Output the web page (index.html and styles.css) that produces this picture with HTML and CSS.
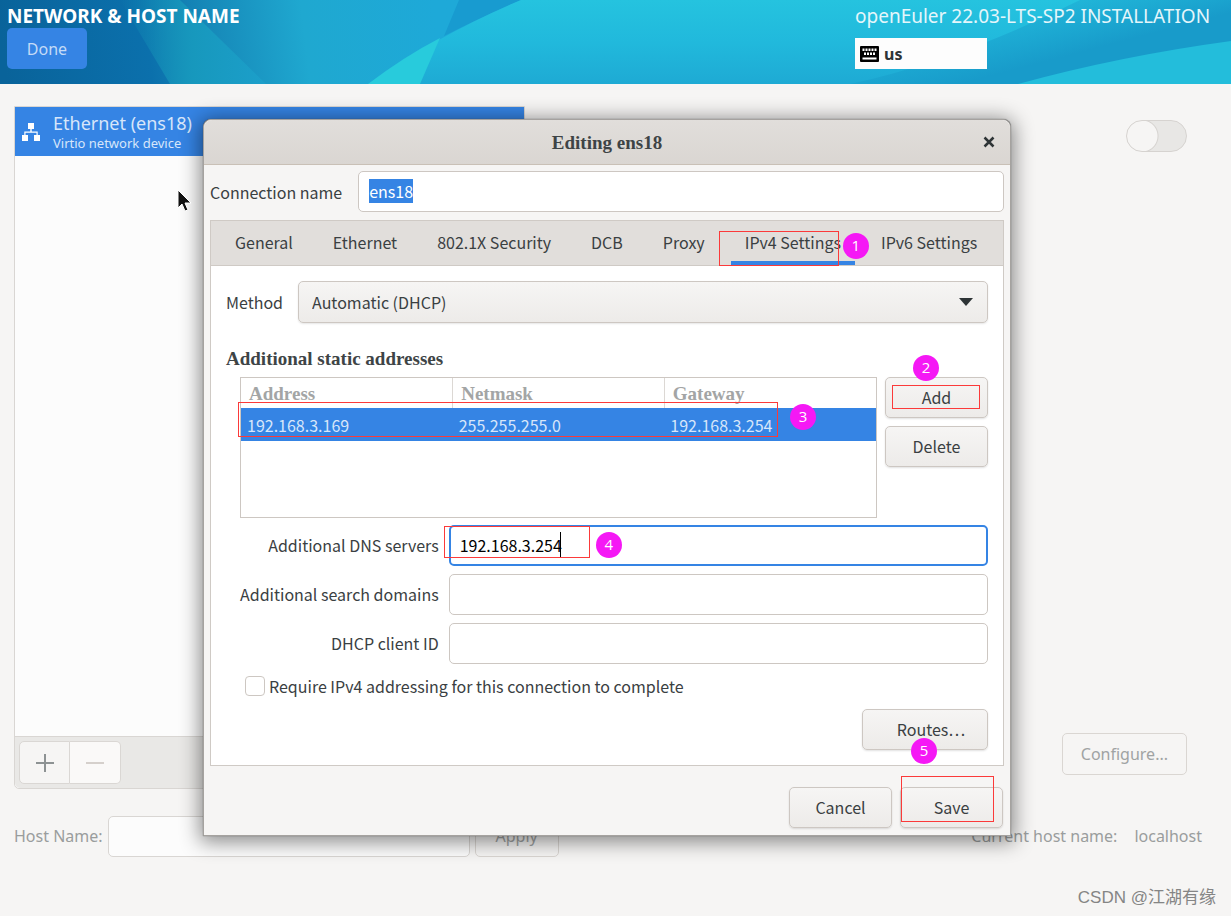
FILE: index.html
```html
<!DOCTYPE html>
<html lang="en">
<head>
<meta charset="utf-8">
<title>Network &amp; Host Name</title>
<link rel="stylesheet" href="styles.css">
</head>
<body>
<div class="page">
  <header class="banner">
    <svg class="banner-art" viewBox="0 0 1231 84" preserveAspectRatio="none" aria-hidden="true">
      <defs>
        <linearGradient id="base" gradientUnits="userSpaceOnUse" x1="0" x2="1200" y1="30" y2="-110">
          <stop offset="0" stop-color="#09639a"/><stop offset=".12" stop-color="#0b70ac"/><stop offset=".17" stop-color="#1688b8"/><stop offset=".25" stop-color="#1fa8d0"/><stop offset=".36" stop-color="#1ea9d8"/><stop offset="1" stop-color="#1fa8d6"/>
        </linearGradient>
        <linearGradient id="fold" x1="0" x2="1" y1="0" y2="0">
          <stop offset="0" stop-color="#1593b6" stop-opacity="0"/><stop offset=".5" stop-color="#1798bd"/><stop offset="1" stop-color="#1c9fca"/>
        </linearGradient>
        <linearGradient id="sweep" x1="0" x2="0" y1="0" y2="1">
          <stop offset="0" stop-color="#25c3df"/><stop offset=".5" stop-color="#21b9dc"/><stop offset="1" stop-color="#1eaad4"/>
        </linearGradient>
        <linearGradient id="right" gradientUnits="userSpaceOnUse" x1="930" x2="960" y1="-30" y2="84">
          <stop offset="0" stop-color="#22bddd" stop-opacity="0"/><stop offset="1" stop-color="#189bca"/>
        </linearGradient>
      </defs>
      <rect width="1231" height="84" fill="url(#base)"/>
      <path d="M120 0H180L266 84H170Z" fill="url(#fold)"/>
      <path d="M459 0H521Q480 18 444 36Z" fill="#189bd0"/>
      <path d="M368 84Q440 34 521 0H1231V84Z" fill="url(#sweep)"/>
      <path d="M368 84Q405 56 440 38L420 84Z" fill="#28cbdc"/>
      <path d="M850 84Q960 60 1080 0H1231V84Z" fill="url(#right)"/>
      <path d="M1018 84Q1120 56 1231 41V84Z" fill="#23bddb"/>
    </svg>
    <div class="banner-left">
      <h1 class="banner-title">NETWORK &amp; HOST NAME</h1>
      <button class="done" type="button">Done</button>
    </div>
    <div class="banner-right">
      <div class="product">openEuler 22.03-LTS-SP2 INSTALLATION</div>
      <button class="layout" type="button">
        <svg width="19" height="16" viewBox="0 0 19 16" aria-hidden="true"><rect width="19" height="16" rx="1" fill="#000"/><path d="M2.500 2.500h2v2.500h-2zm3 0h2v2.500h-2zm3 0h2v2.500h-2zm3 0h2v2.500h-2zm3 0h2v2.500h-2zM4 6.500h2v2.500H4zm3 0h2v2.500H7zm3 0h2v2.500h-2zm3 0h2v2.500h-2zM2.500 11.500h14v2h-14z" fill="#fff"/></svg>
        us
      </button>
    </div>
  </header>

  <main class="network">
    <section class="devices">
      <button class="device" type="button">
        <svg width="20" height="20" viewBox="0 0 20 20" fill="#fff" aria-hidden="true"><path d="M7 1h6v6h-2.300v2.500h6V13H19v6h-6v-6h2.500v-2.200h-11V13H7v6H1v-6h2.300V9.500h6V7H7z"/></svg>
        <span class="device-text"><span class="device-name">Ethernet (ens18)</span><span class="device-kind">Virtio network device</span></span>
      </button>
      <div class="device-space"></div>
      <div class="device-tools">
        <button class="tool" type="button" aria-label="Add device"><svg width="18" height="18" viewBox="0 0 18 18" aria-hidden="true"><path d="M0 9h18M9 0v18" stroke="#8d9293" stroke-width="2"/></svg></button>
        <button class="tool tool-off" type="button" aria-label="Remove device"><svg width="18" height="18" viewBox="0 0 18 18" aria-hidden="true"><path d="M0 9h18" stroke="#d5d0cc" stroke-width="2"/></svg></button>
      </div>
    </section>
    <section class="details">
      <input class="switch" type="checkbox" role="switch" aria-label="Enable connection">
      <button class="flat" type="button">Configure...</button>
    </section>
  </main>

  <footer class="host">
    <label for="host">Host Name:</label>
    <input class="host-input" id="host" type="text">
    <button class="flat apply" type="button">Apply</button>
    <span class="current">Current host name:</span>
    <span>localhost</span>
  </footer>
  <div class="watermark">CSDN @江湖有缘</div>
</div>

<div class="dialog" role="dialog" aria-labelledby="dialog-title">
  <div class="titlebar">
    <h2 class="dialog-title" id="dialog-title">Editing ens18</h2>
    <button class="close" type="button" aria-label="Close"><svg width="12" height="12" viewBox="0 0 12 12" aria-hidden="true"><path d="M1.500 1.500l9 9M10.500 1.500l-9 9" stroke="#2e3436" stroke-width="2.500"/></svg></button>
  </div>
  <div class="dialog-body">
    <div class="name-row">
      <label for="name">Connection name</label>
      <input class="field name-field" id="name" type="text" value="ens18">
    </div>
    <div class="notebook">
      <div class="tabs" role="tablist">
        <button class="tab" type="button" role="tab">General</button>
        <button class="tab" type="button" role="tab">Ethernet</button>
        <button class="tab" type="button" role="tab">802.1X Security</button>
        <button class="tab" type="button" role="tab">DCB</button>
        <button class="tab" type="button" role="tab">Proxy</button>
        <div class="anchor"><button class="tab tab-on" type="button" role="tab" aria-selected="true">IPv4 Settings</button><span class="frame frame-1"></span><span class="step step-1">1</span></div>
        <button class="tab" type="button" role="tab">IPv6 Settings</button>
      </div>
      <div class="panel">
        <div class="method-row">
          <label for="method">Method</label>
          <div class="anchor grow">
            <select class="method" id="method"><option>Automatic (DHCP)</option></select>
            <svg class="arrow" width="14" height="8" viewBox="0 0 14 8" aria-hidden="true"><path d="M0 0h14L7 8z" fill="#2e3436"/></svg>
          </div>
        </div>
        <h3 class="heading">Additional static addresses</h3>
        <div class="addresses">
          <div class="anchor grow grid-box">
            <table class="grid">
              <thead><tr><th>Address</th><th>Netmask</th><th>Gateway</th></tr></thead>
              <tbody><tr><td>192.168.3.169</td><td>255.255.255.0</td><td>192.168.3.254</td></tr></tbody>
            </table>
            <span class="frame frame-3"></span><span class="step step-3">3</span>
          </div>
          <div class="side">
            <div class="anchor"><button class="btn" type="button">Add</button><span class="frame frame-2"></span><span class="step step-2">2</span></div>
            <button class="btn" type="button">Delete</button>
          </div>
        </div>
        <div class="form">
          <label for="dns">Additional DNS servers</label>
          <div class="anchor"><input class="field field-active" id="dns" type="text" value="192.168.3.254"><span class="caret"></span><span class="frame frame-4"></span><span class="step step-4">4</span></div>
          <label for="search">Additional search domains</label>
          <input class="field" id="search" type="text">
          <label for="client">DHCP client ID</label>
          <input class="field" id="client" type="text">
        </div>
        <div class="require">
          <input class="check" id="require" type="checkbox">
          <label for="require">Require IPv4 addressing for this connection to complete</label>
        </div>
        <button class="btn routes" type="button">Routes…</button>
      </div>
    </div>
    <div class="actions">
      <button class="btn" type="button">Cancel</button>
      <div class="anchor"><button class="btn" type="button">Save</button><span class="frame frame-5"></span><span class="step step-5">5</span></div>
    </div>
  </div>
</div>

<svg class="pointer" width="15" height="24" viewBox="0 0 15 24" aria-hidden="true"><path d="M1 1v18l4-4 3 7 3-1-3-7h6z" fill="#111" stroke="#fff"/></svg>
<script src="script.js"></script>
</body>
</html>
```
FILE: script.js
```js
document.getElementById('name').focus();
document.getElementById('name').select();
```
FILE: styles.css
```css
* { box-sizing: border-box; }
body {
  margin: 0;
  background: #f6f5f4;
  color: #2e3436;
  font: 16px/24px "Noto Sans", sans-serif;
}
button, input, select { font: inherit; color: inherit; margin: 0; }
h1, h2, h3 { margin: 0; }
.page { display: flex; flex-direction: column; min-height: 100vh; }

/* banner */
.banner {
  position: relative;
  display: flex;
  justify-content: space-between;
  height: 84px;
  padding: 4px 22px 0 7px;
  color: #fff;
  background: #1faad2;
}
.banner-art { position: absolute; left: 0; top: 0; width: 100%; height: 100%; }
.banner-left, .banner-right { position: relative; display: flex; flex-direction: column; align-items: flex-start; }
.banner-title { font: bold 19px/24px "Noto Sans", sans-serif; }
.done {
  width: 80px;
  height: 41px;
  border: 0;
  border-radius: 5px;
  background: #3584e4;
  color: #c4dbf7;
}
.banner-right { width: 354px; gap: 10px; }
.product { font-size: 19px; white-space: nowrap; color: #e4f6fb; }
.layout {
  display: flex;
  align-items: center;
  gap: 5px;
  width: 132px;
  height: 31px;
  padding: 0 5px;
  border: 0;
  background: #fdfdfd;
  color: #2e3436;
  font-weight: bold;
}

/* device list */
.network { flex: 1; display: flex; padding: 22px 44px 0 14px; }
.devices {
  display: flex;
  flex-direction: column;
  width: 511px;
  border: 1px solid #d9d6d3;
  border-radius: 0 0 5px 5px;
  background: #fcfcfc;
}
.device {
  display: flex;
  align-items: center;
  gap: 12px;
  height: 49px;
  padding: 0 6px;
  border: 0;
  background: #3584e4;
  color: #d7e6fa;
  text-align: left;
}
.device-text { display: flex; flex-direction: column; }
.device-name { font-size: 18px; line-height: 22px; }
.device-kind { font-size: 13px; line-height: 18px; }
.device-space { flex: 1; }
.device-tools {
  display: flex;
  padding: 4px;
  border-top: 1px solid #d9d6d3;
  background: #e9e8e6;
  border-radius: 0 0 5px 5px;
}
.tool {
  display: flex;
  align-items: center;
  justify-content: center;
  width: 51px;
  height: 43px;
  border: 1px solid #dad7d4;
  border-radius: 5px 0 0 5px;
  background: #f6f5f4;
}
.tool-off { border-left: 0; border-radius: 0 5px 5px 0; background: #faf9f8; }
.details {
  flex: 1;
  display: flex;
  flex-direction: column;
  align-items: flex-end;
  justify-content: space-between;
  padding: 14px 0;
}
.switch {
  appearance: none;
  width: 61px;
  height: 32px;
  border: 1px solid #d6d3d0;
  border-radius: 16px;
  background: radial-gradient(circle at 15px 15px, #f6f5f4 0 15px, #d6d3d0 16px, #e8e7e5 17px);
}
.flat {
  height: 42px;
  padding: 0 18px;
  border: 1px solid #dad6d2;
  border-radius: 5px;
  background: transparent;
  color: #a0a3a3;
}

/* host name row */
.host {
  display: flex;
  align-items: center;
  gap: 5px;
  padding: 26px 29px 0 14px;
  color: #9a9d9d;
}
.host-input {
  width: 362px;
  height: 41px;
  border: 1px solid #d9d6d3;
  border-radius: 5px;
  background: #fcfcfc;
}
.apply { padding: 0 20px; }
.current { margin-left: auto; padding-right: 12px; }
.watermark {
  padding: 29px 15px 6px;
  text-align: right;
  color: #858585;
  font: 17px/24px "Liberation Sans", "Noto Sans CJK SC", sans-serif;
}

/* dialog */
.dialog {
  position: absolute;
  left: 203px;
  right: 220px;
  top: 119px;
  border: 1px solid #a5a29f;
  border-radius: 8px 8px 0 0;
  background: #f6f5f4;
  box-shadow: 0 3px 20px 3px rgba(0, 0, 0, .45), 0 0 1px #555;
  color: #3a4042;
  font: 16px/26px "Noto Sans CJK SC", sans-serif;
}
.titlebar {
  position: relative;
  display: flex;
  align-items: center;
  justify-content: center;
  height: 45px;
  padding-top: 2px;
  border-bottom: 1px solid #c9c0b6;
  border-radius: 8px 8px 0 0;
  background: linear-gradient(#e1dedb, #dad6d2);
}
.dialog-title { font: bold 19px/26px "Liberation Serif", serif; color: #3e4446; }
.close { position: absolute; right: 15px; top: 16px; display: flex; padding: 0; border: 0; background: none; }
.dialog-body { padding: 6px; }
.name-row { display: flex; align-items: center; gap: 16px; white-space: nowrap; }
.field {
  display: block;
  width: 100%;
  height: 41px;
  padding: 0 10px 2px;
  border: 1px solid #cdc7c2;
  border-radius: 5px;
  background: #fff;
  outline: none;
}
.field-active { border: 2px solid #3584e4; padding: 0 9px 2px; color: #000; }
.field::selection { background: #3584e4; color: #fff; }
.notebook { margin-top: 8px; border: 1px solid #cfcac5; background: #fff; }
.tabs {
  display: flex;
  gap: 12px;
  height: 45px;
  padding-left: 10px;
  border-bottom: 1px solid #cfcac5;
  background: #e1dedb;
}
.tab {
  height: 44px;
  padding: 0 14px 2px;
  border: 0;
  background: none;
  white-space: nowrap;
}
.tab-on { box-shadow: inset 0 -4px #3584e4; }
.anchor { position: relative; }
.grow { flex: 1; }
.panel { display: flex; flex-direction: column; padding: 15px; }
.method-row { display: flex; align-items: center; gap: 15px; }
.method {
  appearance: none;
  display: block;
  width: 100%;
  height: 42px;
  padding: 0 13px;
  border: 1px solid #cdc7c2;
  border-radius: 5px;
  background: linear-gradient(#f6f5f4, #edebe9);
  box-shadow: 0 1px 2px rgba(0, 0, 0, .1);
}
.arrow { position: absolute; right: 15px; top: 17px; pointer-events: none; }
.heading { margin: 23px 0 5px; font: bold 19px/26px "Liberation Serif", serif; color: #3e4446; }
.addresses { display: flex; gap: 8px; padding-left: 14px; }
.grid-box { height: 141px; border: 1px solid #cdc7c2; }
.grid { width: 100%; table-layout: fixed; border-collapse: collapse; }
.grid th {
  height: 30px;
  padding: 2px 8px 0;
  border-right: 1px solid #dcd8d4;
  color: #a3a5a5;
  font: bold 19px/26px "Liberation Serif", serif;
  text-align: left;
}
.grid th:last-child { border-right: 0; }
.grid td { height: 33px; padding: 0 6px; background: #3584e4; color: #d7e6fa; }
.side { display: flex; flex-direction: column; gap: 8px; width: 103px; }
.btn {
  width: 103px;
  height: 41px;
  padding: 0 6px 2px;
  border: 1px solid #cdc7c2;
  border-radius: 5px;
  background: linear-gradient(#f6f5f4, #edebe9);
  box-shadow: 0 1px 2px rgba(0, 0, 0, .12);
}
.form {
  display: grid;
  grid-template-columns: auto 1fr;
  align-items: center;
  gap: 8px 10px;
  padding: 7px 0 0 14px;
}
.form label { padding-bottom: 2px; text-align: right; }
.caret { position: absolute; left: 111px; top: 7px; width: 1px; height: 26px; background: #000; }
.require { display: flex; align-items: center; gap: 4px; padding: 9px 0 10px 19px; }
.check {
  appearance: none;
  width: 20px;
  height: 20px;
  border: 1px solid #cdc7c2;
  border-radius: 4px;
  background: #fff;
}
.routes { align-self: flex-end; width: 126px; padding-left: 18px; }
.actions { display: flex; justify-content: flex-end; gap: 8px; padding: 21px 1px 1px 0; }

/* numbered callouts */
.frame { position: absolute; border: 1px solid #fb3a3a; pointer-events: none; z-index: 1; }
.step {
  position: absolute;
  z-index: 2;
  width: 26px;
  height: 26px;
  border-radius: 50%;
  background: #f518f5;
  color: #fff;
  font: 15px/24px "Open Sans", sans-serif;
  text-align: center;
}
.frame-1 { left: -12px; top: 10px; width: 120px; height: 35px; }
.step-1 { left: 112px; top: 12px; }
.frame-2 { left: 7px; top: 8px; width: 88px; height: 24px; }
.step-2 { left: 28px; top: -22px; }
.frame-3 { left: -3px; top: 24px; width: 540px; height: 35px; }
.step-3 { left: 549px; top: 26px; }
.frame-4 { left: -5px; top: 1px; width: 146px; height: 32px; }
.step-4 { left: 147px; top: 7px; }
.frame-5 { left: 1px; top: -11px; width: 93px; height: 46px; }
.step-5 { left: 11px; top: -49px; }
.pointer { position: absolute; left: 177px; top: 189px; }
```
